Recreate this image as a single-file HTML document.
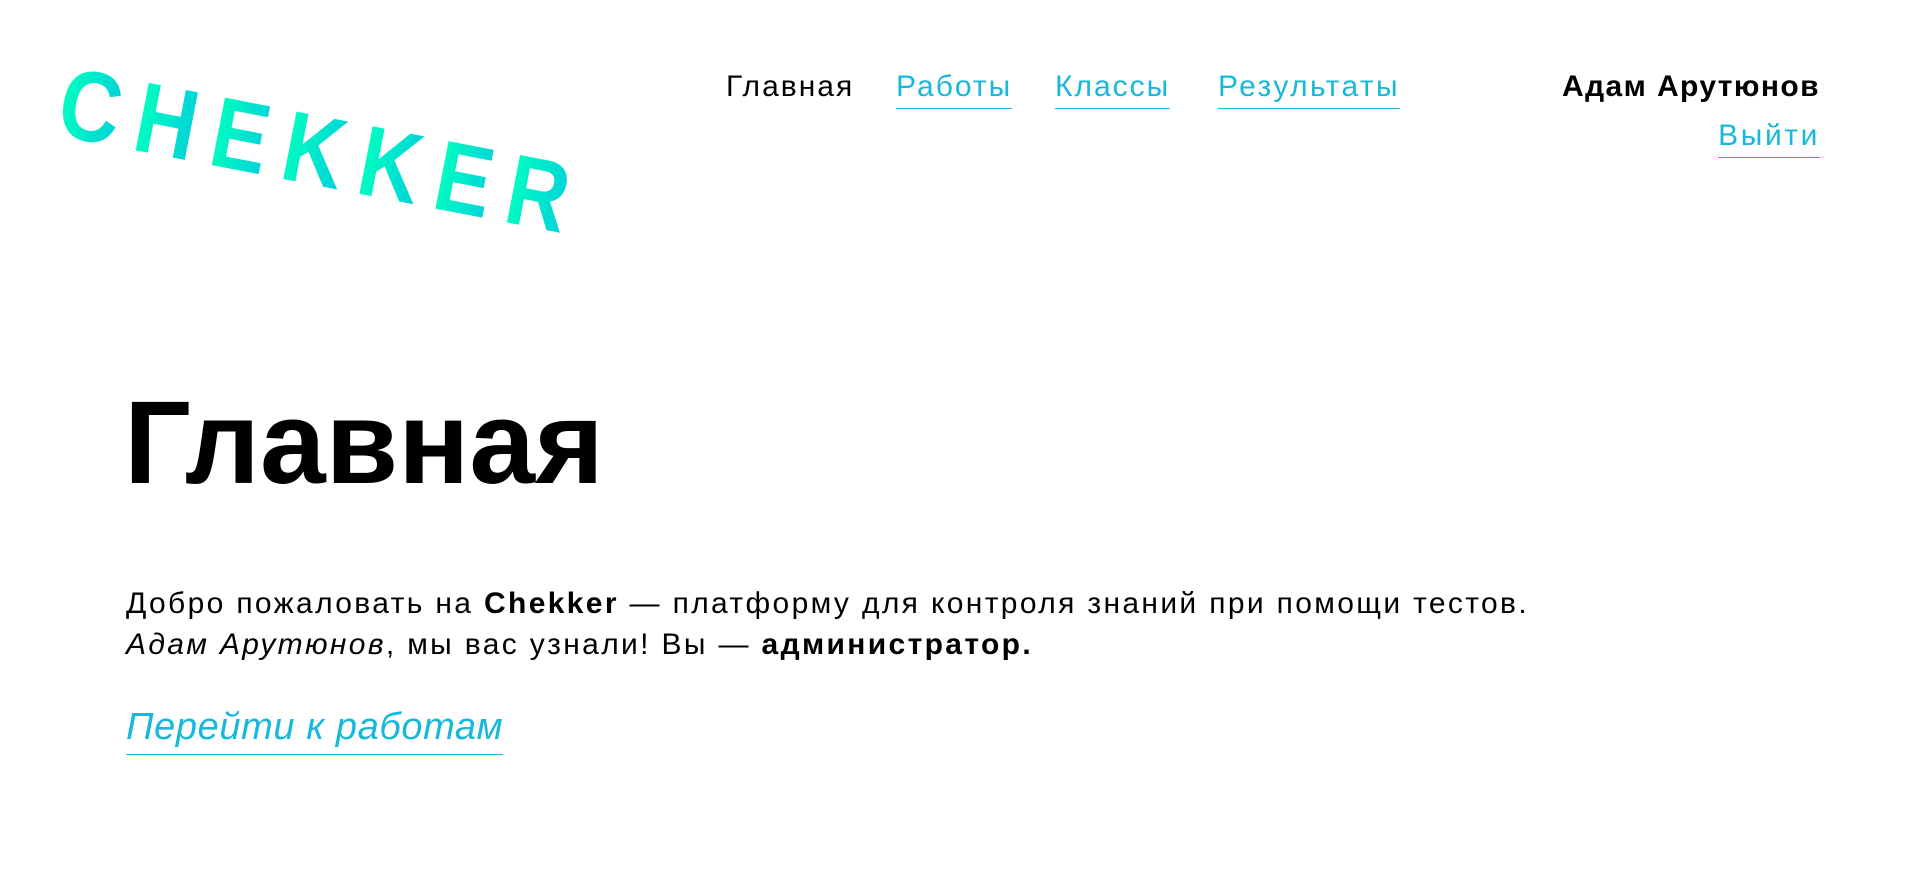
<!DOCTYPE html>
<html><head><meta charset="utf-8"><style>
html,body{margin:0;padding:0;background:#fff;width:1920px;height:888px;overflow:hidden;font-family:"Liberation Sans",sans-serif;color:#000}
.a{position:absolute;white-space:nowrap}
.nav{font-size:30px;line-height:34px;letter-spacing:2px}
.lk{color:#18b8dc;border-bottom:1.5px solid #18b8dc;padding-bottom:4px}
.logo{position:absolute;left:70px;top:52px;transform:rotate(11deg) scaleX(0.85);transform-origin:0 0;font-size:100px;font-weight:bold;letter-spacing:19px;line-height:1}
.logo span{background:linear-gradient(90deg,#00ffc0,#00c6e0);-webkit-background-clip:text;background-clip:text;color:transparent}
</style></head><body>
<div class="logo"><span>C</span><span>H</span><span>E</span><span>K</span><span>K</span><span>E</span><span>R</span></div>
<div class="a nav" style="left:726px;top:70px">Главная</div>
<div class="a nav lk" style="left:896px;top:70px">Работы</div>
<div class="a nav lk" style="left:1055px;top:70px">Классы</div>
<div class="a nav lk" style="left:1218px;top:70px;letter-spacing:2.4px">Результаты</div>
<div class="a nav" style="right:100px;top:70px;font-weight:bold;letter-spacing:1.4px">Адам Арутюнов</div>
<div class="a nav lk" style="right:100px;top:119px;letter-spacing:2.6px">Выйти</div>
<div class="a" style="left:124px;top:373px;font-size:118px;font-weight:bold;line-height:140px">Главная</div>
<div class="a" style="left:126px;top:583px;font-size:30px;line-height:41px;letter-spacing:2.35px">Добро пожаловать на <b>Chekker</b> — платформу для контроля знаний при помощи тестов.<br><i>Адам Арутюнов</i>, мы вас узнали! Вы — <b>администратор.</b></div>
<div class="a lk" style="left:126px;top:704px;font-size:38px;line-height:46px;font-style:italic;padding-bottom:4px;letter-spacing:0.6px">Перейти к работам</div>
</body></html>
